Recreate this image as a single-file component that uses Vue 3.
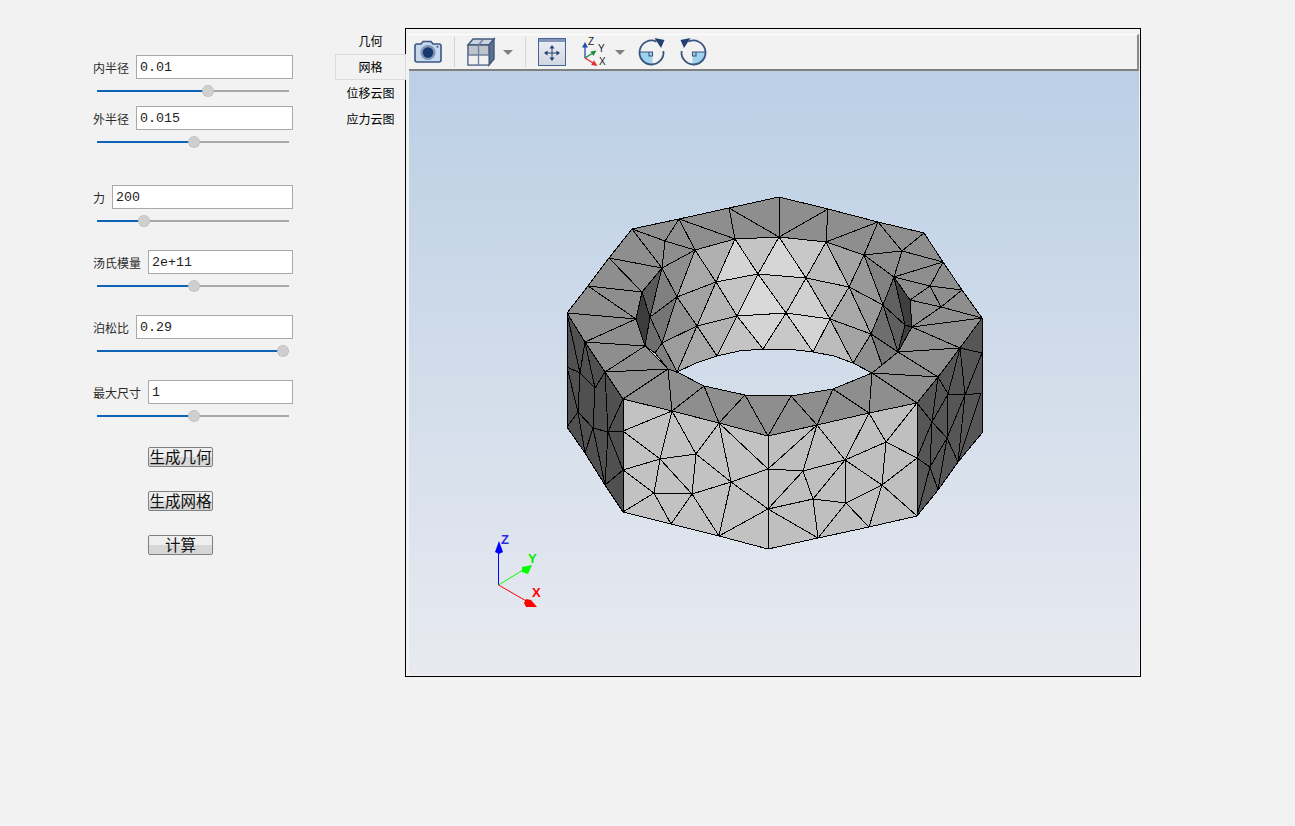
<template>
  <div class="page">
    <div class="panel">
      <div class="group" :class="item.size" v-for="item in fields" :key="item.label">
        <div class="field">
          <label>{{ item.label }}</label>
          <input type="text" :value="item.value" readonly />
        </div>
        <div class="slider">
          <div class="fill" :style="{ width: item.pos + 'px' }"></div>
          <div class="thumb" :style="{ left: item.pos - 6 + 'px' }"></div>
        </div>
      </div>
      <div class="actions">
        <button v-for="name in actions" :key="name">{{ name }}</button>
      </div>
    </div>

    <ul class="tabs">
      <li v-for="tab in tabs" :key="tab" :class="{ active: tab === '网格' }">{{ tab }}</li>
    </ul>

    <div class="viewer">
      <div class="toolbar">
        <svg class="ic-camera" width="28" height="24" viewBox="0 0 28 24">
          <path d="M1 6 Q1 4 3 4 H7 L9 1.5 H17 L19 4 H25 Q27 4 27 6 V20 Q27 22 25 22 H3 Q1 22 1 20 Z" fill="#c6d8ec" stroke="#3d5681" stroke-width="1.6" />
          <circle cx="14" cy="12.5" r="7.6" fill="#7d93b6" />
          <circle cx="14" cy="12.5" r="5.2" fill="#17376f" />
          <circle cx="23.5" cy="6.8" r="1" fill="#3d5681" />
        </svg>
        <i class="sep"></i>
        <svg class="ic-grid" width="28" height="30" viewBox="0 0 28 30">
          <path d="M1 8 L6 2 H27 L22 8 Z" fill="#c9d2df" stroke="#42587c" stroke-width="1.4" />
          <path d="M22 8 L27 2 V22 L22 28 Z" fill="#5d7091" stroke="#42587c" stroke-width="1.4" />
          <rect x="1" y="8" width="21" height="20" fill="#bfc4ca" stroke="#42587c" stroke-width="1.4" />
          <rect x="1.7" y="18" width="19.6" height="9.3" fill="#f0f0f0" />
          <path d="M11.5 8 V28 M1 18 H22 M11.5 8 L16.5 2" fill="none" stroke="#6d7f9c" stroke-width="1.3" />
        </svg>
        <i class="caret"></i>
        <i class="sep"></i>
        <svg class="ic-fit" width="28" height="28" viewBox="0 0 28 28">
          <defs>
            <linearGradient id="fitfill" x1="0" y1="0" x2="0" y2="1">
              <stop offset="0" stop-color="#eef0f5" />
              <stop offset="1" stop-color="#cfd5e2" />
            </linearGradient>
          </defs>
          <rect x="0.5" y="0.5" width="27" height="27" fill="url(#fitfill)" stroke="#4a6491" />
          <rect x="1" y="1" width="26" height="3" fill="#8297b8" />
          <path d="M14 9 V21 M8 15 H20" stroke="#22406f" stroke-width="1" />
          <path d="M14 7 L11.5 10.5 H16.5 Z M14 23 L11.5 19.5 H16.5 Z M6 15 L9.5 12.5 V17.5 Z M22 15 L18.5 12.5 V17.5 Z" fill="#22406f" />
        </svg>
        <svg class="ic-triad" width="24" height="28" viewBox="0 0 24 28">
          <path d="M2 20 V8" stroke="#1d4fa3" stroke-width="1.3" />
          <path d="M2 4 L-1 9.5 H5 Z" fill="#1d4fa3" />
          <path d="M2 20 L10 15" stroke="#1b8a3f" stroke-width="1.4" />
          <path d="M13.5 12.5 L7.5 13.4 L10.4 18 Z" fill="#1b8a3f" />
          <path d="M2 20 L10 25" stroke="#e03030" stroke-width="1.4" />
          <path d="M14.5 28 L8.2 27 L11 22.2 Z" fill="#e03030" />
          <text x="5" y="6.5">Z</text>
          <text x="15" y="14">Y</text>
          <text x="16" y="27">X</text>
        </svg>
        <i class="caret"></i>
        <svg class="ic-rot" width="27" height="28" viewBox="0 0 27 28">
          <path d="M14.5 14 H1.5 A12 12 0 0 0 14.5 26 Z" fill="#9ed2ee" />
          <path d="M25.4 13 A12 12 0 1 1 18.5 3.6" fill="none" stroke="#3a5580" stroke-width="1.8" />
          <path d="M1.5 14 H14.5 V18 H11 V14" fill="none" stroke="#3a5580" stroke-width="1.1" />
          <path d="M16.5 0 L26.5 2 L23 10 Z" fill="#21406f" />
        </svg>
        <svg class="ic-rot back" width="27" height="28" viewBox="0 0 27 28">
          <path d="M14.5 14 H1.5 A12 12 0 0 0 14.5 26 Z" fill="#9ed2ee" />
          <path d="M25.4 13 A12 12 0 1 1 18.5 3.6" fill="none" stroke="#3a5580" stroke-width="1.8" />
          <path d="M1.5 14 H14.5 V18 H11 V14" fill="none" stroke="#3a5580" stroke-width="1.1" />
          <path d="M16.5 0 L26.5 2 L23 10 Z" fill="#21406f" />
        </svg>
      </div>

      <div class="canvas">
        <!-- coordinates are page pixels, hence the viewBox origin -->
        <svg width="730" height="604" viewBox="409 71 730 604">
          <path :d="topFace" fill="#8e8e8e" fill-rule="evenodd" stroke="#000" shape-rendering="crispEdges" />
          <polygon v-for="(f, i) in wall" :key="'w' + i" :points="f[0]" :fill="f[1]" stroke="#000" shape-rendering="crispEdges" />
          <polygon points="623,399 672,411 719,423 768,436 768,549 719,536 671,524 623,512" fill="#c2c2c2" />
          <polygon points="768,436 817,425 869,413 917,403 917,516 869,527 818,538 768,549" fill="#bfbfbf" />
          <polygon points="567,313 585,342 605,372 623,399 623,512 605,485 585,453 567,427" fill="#505050" />
          <polygon points="917,403 938,377 960,348 982,318 982,433 958,462 938,490 917,516" fill="#565656" />
          <path :d="edgePath" fill="none" stroke="#000" shape-rendering="crispEdges" />

          <g class="axes">
            <path d="M498.5 585 V550" stroke="#0000ff" />
            <path d="M495 552 L499 541 L503 552 L499 554 Z" fill="#0000ff" />
            <path d="M498.5 585 L523 570" stroke="#00ff00" />
            <path d="M522 567 L532 565 L528 574 L522 572 Z" fill="#00ff00" />
            <path d="M498.5 585 L528 602" stroke="#ff0000" />
            <path d="M526 599 L531 600 L537 607 L526 607 L524 603 Z" fill="#ff0000" />
            <text x="501" y="544" fill="#2a2ae0">Z</text>
            <text x="528" y="563" fill="#00ee00">Y</text>
            <text x="532" y="597" fill="#ff0000">X</text>
          </g>
        </svg>
      </div>
    </div>
  </div>
</template>

<script setup>
const fields = [
  { label: '内半径', value: '0.01', pos: 111, size: 'tight' },
  { label: '外半径', value: '0.015', pos: 97, size: 'loose' },
  { label: '力', value: '200', pos: 47, size: '' },
  { label: '汤氏模量', value: '2e+11', pos: 97, size: '' },
  { label: '泊松比', value: '0.29', pos: 186, size: '' },
  { label: '最大尺寸', value: '1', pos: 97, size: '' },
]
const actions = ['生成几何', '生成网格', '计算']
const tabs = ['几何', '网格', '位移云图', '应力云图']

const outer = '567,313 588,286 609,258 632,229 679,219 729,208 779,197 828,209 878,222 924,233 943,262 962,290 982,318 960,348 938,377 917,403 869,413 817,425 768,436 719,423 672,411 623,399 605,372 585,342'
const hole = '695,250 735,239 779,237 826,242 864,255 894,277 910,300 912,327 898,352 872,373 833,389 791,396 745,395 704,386 677,372 668,369 645,346 636,319 642,292 662,268'
const topFace = `M${outer.split(' ').join(' L')} Z M${hole.split(' ').join(' L')} Z`

// inner wall of the ring, flat shaded. extra points on the lower rim keep it round
const wall = [
  ['642,292 636,319 645,346 650,317', '#3c3c3c'],
  ['642,292 662,268 650,317', '#5a5a5a'],
  ['662,268 677,297 650,317', '#808080'],
  ['650,317 662,343 655,353 645,346', '#6e6e6e'],
  ['650,317 677,297 662,343', '#757575'],
  ['677,297 697,326 662,343', '#909090'],
  ['662,343 697,326 677,372', '#9c9c9c'],
  ['662,343 677,372 668,369 655,353', '#808080'],
  ['662,268 695,250 677,297', '#8e8e8e'],
  ['695,250 716,282 677,297', '#a8a8a8'],
  ['677,297 716,282 697,326', '#a2a2a2'],
  ['716,282 737,316 697,326', '#b5b5b5'],
  ['697,326 737,316 717,356', '#b2b2b2'],
  ['697,326 717,356 696,363 677,372', '#a8a8a8'],
  ['695,250 735,239 716,282', '#b0b0b0'],
  ['735,239 758,274 716,282', '#d4d4d4'],
  ['716,282 758,274 737,316', '#c4c4c4'],
  ['758,274 786,313 737,316', '#d8d8d8'],
  ['737,316 786,313 763,349', '#d4d4d4'],
  ['737,316 763,349 739,351 717,356', '#c4c4c4'],
  ['735,239 779,237 758,274', '#c4c4c4'],
  ['779,237 806,278 758,274', '#d6d6d6'],
  ['758,274 806,278 786,313', '#c8c8c8'],
  ['806,278 830,319 786,313', '#d0d0d0'],
  ['786,313 830,319 813,352', '#d4d4d4'],
  ['786,313 813,352 788,349 763,349', '#c8c8c8'],
  ['779,237 826,242 806,278', '#c8c8c8'],
  ['826,242 849,287 806,278', '#bcbcbc'],
  ['806,278 849,287 830,319', '#b8b8b8'],
  ['849,287 871,334 830,319', '#a8a8a8'],
  ['830,319 871,334 853,363', '#a4a4a4'],
  ['830,319 853,363 834,356 813,352', '#bcbcbc'],
  ['826,242 864,255 849,287', '#a4a4a4'],
  ['864,255 883,305 849,287', '#989898'],
  ['849,287 883,305 871,334', '#9a9a9a'],
  ['864,255 894,277 883,305', '#828282'],
  ['883,305 894,277 905,325', '#606060'],
  ['894,277 910,300 912,327 905,325', '#3f3f3f'],
  ['883,305 905,325 898,352', '#5f5f5f'],
  ['883,305 898,352 871,334', '#6e6e6e'],
  ['905,325 912,327 898,352', '#3f3f3f'],
  ['871,334 898,352 882,365', '#787878'],
  ['871,334 882,365 872,373 853,363', '#8e8e8e'],
]

// mesh edges: top face, front faces, then the two dark sides
const edges = [
  '632,229 665,241', '632,229 662,268', '665,241 679,219', '679,219 695,250', '665,241 695,250',
  '665,241 662,268', '679,219 735,239', '729,208 735,239', '729,208 779,237', '779,197 779,237',
  '779,237 828,209', '828,209 826,242', '826,242 878,222', '878,222 864,255', '878,222 902,251',
  '864,255 902,251', '902,251 924,233', '902,251 943,262', '902,251 894,277', '894,277 943,262',
  '894,277 930,286', '943,262 930,286', '930,286 962,290', '930,286 941,307', '962,290 941,307',
  '910,300 930,286', '910,300 941,307', '912,327 941,307', '941,307 982,318', '912,327 982,318',
  '912,327 960,348', '898,352 960,348', '898,352 938,377', '872,373 938,377',
  '609,258 662,268', '609,258 642,292', '588,286 642,292', '588,286 636,319', '567,313 636,319',
  '585,342 636,319', '585,342 645,346', '605,372 645,346', '605,372 668,369', '668,369 623,399',
  '668,369 672,411', '672,411 704,386', '704,386 719,423', '719,423 745,395', '745,395 768,436',
  '768,436 791,396', '791,396 817,425', '817,425 833,389', '833,389 869,413', '869,413 872,373',
  '872,373 917,403',

  '623,399 672,411', '672,411 719,423', '719,423 768,436', '768,436 817,425', '817,425 869,413',
  '869,413 917,403', '623,399 623,512', '623,512 671,524', '671,524 719,536', '719,536 768,549',
  '768,549 818,538', '818,538 869,527', '869,527 917,516', '917,403 917,516', '768,436 768,549',
  '623,431 672,411', '672,411 660,459', '672,411 696,454', '623,431 660,459', '623,470 660,459',
  '660,459 696,454', '719,423 696,454', '696,454 692,494', '660,459 692,494', '660,459 654,493',
  '623,470 654,493', '654,493 692,494', '623,512 654,493', '654,493 671,524', '692,494 671,524',
  '692,494 719,536', '692,494 731,482', '696,454 731,482', '719,423 731,482', '731,482 768,469',
  '719,423 768,469', '731,482 719,536', '731,482 768,509', '719,536 768,509',
  '768,469 817,425', '817,425 803,471', '817,425 845,460', '803,471 845,460', '869,413 845,460',
  '869,413 886,442', '845,460 886,442', '917,403 886,442', '886,442 917,458', '886,442 882,485',
  '845,460 882,485', '917,458 882,485', '845,460 846,503', '882,485 846,503', '882,485 869,527',
  '882,485 917,516', '917,458 917,516', '846,503 869,527', '846,503 818,538', '813,499 846,503',
  '813,499 818,538', '768,509 813,499', '768,509 818,538', '803,471 813,499', '845,460 813,499',
  '768,469 803,471', '803,471 768,509',

  '567,313 567,427', '567,427 585,453', '585,453 605,485', '605,485 623,512',
  '567,313 585,342', '585,342 605,372', '605,372 623,399',
  '567,313 580,373', '585,342 580,373', '567,367 580,373', '567,367 578,412', '580,373 578,412',
  '578,412 567,427', '578,412 593,428', '580,373 595,388', '595,388 593,428', '605,372 595,388',
  '585,342 595,388', '605,372 608,432', '623,399 608,432', '608,432 623,431', '593,428 608,432',
  '593,428 585,453', '578,412 585,453', '593,428 605,485', '608,432 605,485', '608,432 623,470',
  '623,470 605,485',

  '917,403 938,377', '938,377 960,348', '960,348 982,318', '982,318 982,433', '982,433 958,462',
  '958,462 938,490', '938,490 917,516',
  '917,403 932,422', '938,377 932,422', '932,422 948,394', '938,377 948,394', '948,394 965,395',
  '965,395 981,393', '960,348 948,394', '960,348 965,395', '960,348 982,353', '982,353 965,395',
  '965,395 947,438', '948,394 947,438', '932,422 947,438', '932,422 917,458', '932,422 930,467',
  '947,438 930,467', '917,458 930,467', '930,467 917,516', '930,467 938,490', '947,438 958,462',
  '947,438 938,490', '965,395 958,462', '981,393 958,462',
]
const edgePath = edges.map((e) => 'M' + e.replace(' ', ' L')).join(' ')
</script>

<style scoped>
.page {
  display: flex;
  align-items: flex-start;
  width: 1295px;
  height: 826px;
  padding: 28px 0 0 93px;
  box-sizing: border-box;
  background: #f2f2f2;
  font-family: "Noto Sans CJK SC", "Liberation Sans", sans-serif;
}
.panel {
  width: 200px;
  padding-top: 27px;
}
.group {
  height: 65px;
}
.group.tight {
  height: 51px;
}
.group.loose {
  height: 79px;
}
.field {
  display: flex;
  align-items: center;
  gap: 7px;
  height: 24px;
}
.field label {
  font-size: 12px;
  color: #2b2b2b;
  white-space: nowrap;
}
.field input {
  flex: 1;
  min-width: 0;
  height: 24px;
  padding: 1px 3px 0;
  box-sizing: border-box;
  border: 1px solid #a9a9a9;
  border-radius: 0;
  outline: none;
  background: #fff;
  font-family: "Liberation Mono", monospace;
  font-size: 13.33px;
  color: #222;
}
.slider {
  position: relative;
  width: 192px;
  height: 2px;
  margin: 11px 0 0 4px;
  background: #a8a8a8;
}
.fill {
  height: 2px;
  background: #0f63b6;
}
.thumb {
  position: absolute;
  top: -5px;
  width: 12px;
  height: 12px;
  box-sizing: border-box;
  border: 1px dotted #b4b4b4;
  border-radius: 50%;
  background: #cfcfcf;
}
.actions {
  display: flex;
  flex-direction: column;
  gap: 24px;
  width: 65px;
  margin: 2px 0 0 55px;
}
.actions button {
  width: 65px;
  height: 20px;
  padding: 0 0 2px;
  border: 1px solid #808080;
  border-radius: 2px;
  background: linear-gradient(#efefef 50%, #d7d7d7 50%);
  font-family: "Noto Sans CJK SC", sans-serif;
  font-size: 15.5px;
  line-height: 16px;
  color: #111;
  white-space: nowrap;
}
.tabs {
  position: relative;
  z-index: 1;
  width: 71px;
  margin: 0 -1px 0 42px;
  padding: 0;
  list-style: none;
  font-size: 12px;
  color: #000;
  text-align: center;
}
.tabs li {
  height: 26px;
  line-height: 26px;
  box-sizing: border-box;
}
.tabs li.active {
  border: 1px solid #dcdcdc;
  line-height: 24px;
  background: #f2f2f2;
}
.viewer {
  display: flex;
  flex-direction: column;
  width: 736px;
  height: 649px;
  padding: 5px 1px 1px 3px;
  box-sizing: border-box;
  border: 1px solid #000;
  background: #f2f2f2;
}
.toolbar {
  display: flex;
  align-items: center;
  flex: none;
  height: 37px;
  padding-left: 5px;
  box-sizing: border-box;
  border-top: 1px solid #fff;
  border-right: 2px solid #8a8a8a;
  border-bottom: 2px solid #808080;
  background: #f2f2f2;
}
.toolbar svg {
  flex: none;
  overflow: visible;
}
.toolbar text {
  font-family: "Liberation Sans", sans-serif;
  font-size: 10px;
  fill: #222;
}
.sep {
  width: 1px;
  height: 30px;
  margin-left: 12px;
  background: #d4d4d4;
}
.caret {
  width: 0;
  height: 0;
  margin-left: 8px;
  border-style: solid;
  border-width: 5px 5px 0;
  border-color: #808080 transparent transparent;
}
.ic-grid,
.ic-fit {
  margin-left: 12px;
}
.ic-triad {
  margin-left: 17px;
}
.ic-rot {
  margin-left: 13px;
}
.ic-rot.back {
  margin-left: 15px;
  transform: scaleX(-1);
}
.canvas {
  flex: 1;
  min-height: 0;
  background: linear-gradient(#bbcfe5, #e8eaf0);
}
.canvas svg {
  display: block;
}
.axes text {
  font-family: "Liberation Sans", sans-serif;
  font-size: 13px;
  font-weight: 700;
}
</style>

<style>
body {
  margin: 0;
  background: #f2f2f2;
}
</style>
